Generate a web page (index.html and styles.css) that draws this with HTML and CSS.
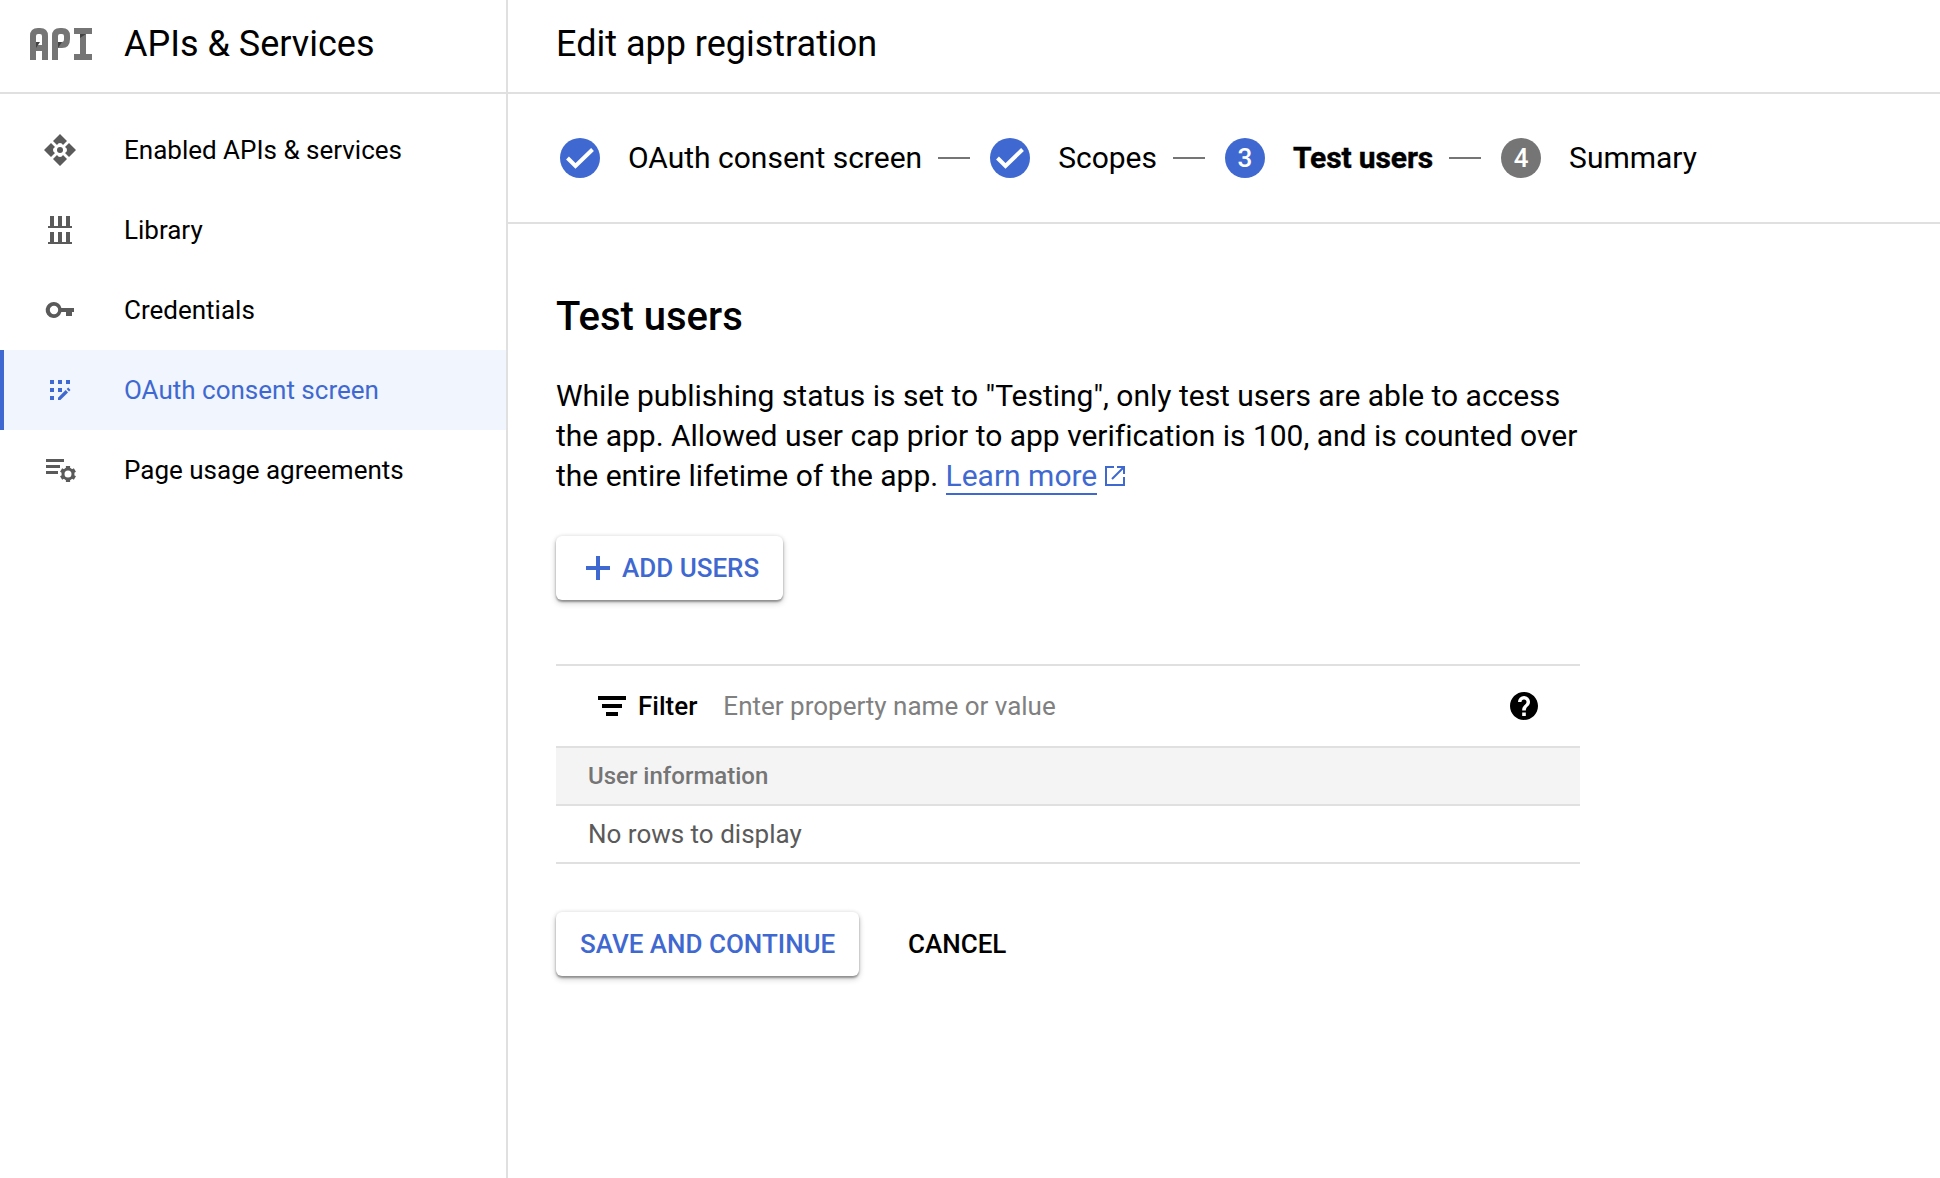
FILE: index.html
```html
<!DOCTYPE html>
<html lang="en">
<head>
<meta charset="utf-8">
<title>Edit app registration – APIs &amp; Services</title>
<link rel="stylesheet" href="styles.css">
</head>
<body>
<div class="app">
  <aside class="sidebar">
    <header class="sidebar-header">
      <svg class="product-logo" width="64" height="34" viewBox="0 0 64 34" aria-hidden="true">
        <g fill="none" stroke="#757575" stroke-width="6">
          <path d="M4 33V9Q4 4 9 4H11Q16 4 16 9V33M4 21H16"/>
          <path d="M26 33V9Q26 4 31 4H33Q38 4 38 9V12Q38 18 33 18H26"/>
          <path d="M45 4H63M54 4V30M45 30H63"/>
        </g>
        <path fill="#424242" d="M7 15V21L11 15ZM29 15V21L33 15ZM51 7H57L51 11Z"/>
      </svg>
      <h1 class="sidebar-title">APIs &amp; Services</h1>
    </header>
    <nav class="nav">
      <a class="nav-item">
        <svg class="nav-icon" viewBox="0 0 36 36"><path d="M18 2l7 7-4 4q-1-2-3-2t-3 2l-4-4zM34 18l-7 7-4-4q2-1 2-3t-2-3l4-4zM18 34l-7-7 4-4q1 2 3 2t3-2l4 4zM2 18l7-7 4 4q-2 1-2 3t2 3l-4 4z"/><circle cx="18" cy="18" r="3"/></svg>
        <span>Enabled APIs &amp; services</span>
      </a>
      <a class="nav-item">
        <svg class="nav-icon" viewBox="0 0 36 36"><path d="M8 4h4v10h4V4h4v10h4V4h4v10h2v2H6v-2h2zM8 20h4v10h4V20h4v10h4V20h4v10h2v2H6v-2h2z"/></svg>
        <span>Library</span>
      </a>
      <a class="nav-item">
        <svg class="nav-icon" viewBox="0 0 36 36"><path fill-rule="evenodd" d="M12 10a8 8 0 1 0 7.400 10H24v4h6v-4h2v-4H19.400A8 8 0 0 0 12 10zM12 13.800a4.200 4.200 0 1 1 0 8.400a4.200 4.200 0 0 1 0-8.400z"/></svg>
        <span>Credentials</span>
      </a>
      <a class="nav-item active">
        <svg class="nav-icon" viewBox="0 0 36 36"><path d="M8 8h4v4H8zM16 8h4v4h-4zM24 8h4v4h-4zM8 16h4v4H8zM16 16h4v4h-4zM8 24h4v4H8zM16 25.800l7.700-7.700 2.300 2.300-7.600 7.600H16zM24.700 17.100l1.500-1.500 2.300 2.300-1.500 1.500z"/></svg>
        <span>OAuth consent screen</span>
      </a>
      <a class="nav-item">
        <svg class="nav-icon" viewBox="0 0 36 36"><path d="M4 7h18v3H4zM4 13h14v3H4zM4 19h12v3H4z"/><circle cx="26" cy="22" r="5" fill="none" stroke="#5a5a5a" stroke-width="3"/><path d="M26 14v3.500M26 26.500v3.500M19.100 18l3 1.750M29.900 24.250l3 1.750M19.100 26l3-1.750M29.900 19.750l3-1.750" stroke="#5a5a5a" stroke-width="4.200"/></svg>
        <span>Page usage agreements</span>
      </a>
    </nav>
  </aside>
  <main class="main">
    <header class="page-header"><h2 class="page-title">Edit app registration</h2></header>
    <ol class="stepper">
      <li class="step">
        <svg class="badge" viewBox="0 0 40 40"><circle cx="20" cy="20" r="20" fill="#3f69d1"/><path d="M7.500 20l8 8L32.500 11.500" fill="none" stroke="#fff" stroke-width="4"/></svg>
        <span class="step-label">OAuth consent screen</span>
      </li>
      <li class="step">
        <svg class="badge" viewBox="0 0 40 40"><circle cx="20" cy="20" r="20" fill="#3f69d1"/><path d="M7.500 20l8 8L32.500 11.500" fill="none" stroke="#fff" stroke-width="4"/></svg>
        <span class="step-label">Scopes</span>
      </li>
      <li class="step current"><span class="badge number">3</span><span class="step-label">Test users</span></li>
      <li class="step"><span class="badge number pending">4</span><span class="step-label">Summary</span></li>
    </ol>
    <section class="content">
      <h3 class="section-title">Test users</h3>
      <p class="description">While publishing status is set to "Testing", only test users are able to access<br>the app. Allowed user cap prior to app verification is 100, and is counted over<br>the entire lifetime of the app. <a class="link">Learn more</a><svg class="external" viewBox="0 0 24 24"><path d="M11 3H3v18h18v-8M14 3h7v7M21 3L9 15" fill="none" stroke="#3f69d1" stroke-width="2"/></svg></p>
      <button class="button raised add">
        <svg width="24" height="24" viewBox="0 0 24 24"><path d="M12 0v24M0 12h24" stroke="#3f69d1" stroke-width="4"/></svg>
        <span>ADD USERS</span>
      </button>
      <div class="table">
        <div class="filter">
          <svg class="filter-icon" width="28" height="20" viewBox="0 0 28 20"><path d="M0 0h28v4H0zM4 8h20v4H4zM8 16h12v4H8z"/></svg>
          <span class="filter-label">Filter</span>
          <input class="filter-input" placeholder="Enter property name or value">
          <svg class="help" width="28" height="28" viewBox="2 2 20 20"><path d="M12 2C6.480 2 2 6.480 2 12s4.480 10 10 10 10-4.480 10-10S17.520 2 12 2zm1.300 17.200h-2.600v-2.500h2.600zm2.200-7.800l-.9.900c-.8.800-1.300 1.500-1.300 3h-2.600v-.6c0-1.100.500-2.100 1.200-2.900l1.300-1.300c.4-.4.600-.9.600-1.400a1.800 1.800 0 0 0-3.600 0H7.700a4.300 4.300 0 0 1 8.600 0c0 .9-.3 1.700-.8 2.300z"/></svg>
        </div>
        <div class="table-head">User information</div>
        <div class="table-row">No rows to display</div>
      </div>
      <div class="actions">
        <button class="button raised save">SAVE AND CONTINUE</button>
        <button class="button cancel">CANCEL</button>
      </div>
    </section>
  </main>
</div>
</body>
</html>
```
FILE: styles.css
```css
* { box-sizing: border-box; }
body { margin: 0; background: #fff; color: #000; font-family: Roboto, sans-serif; }
h1, h2, h3, p, ol { margin: 0; padding: 0; font-weight: 400; }
svg { flex: none; }

.app { display: flex; height: 1178px; overflow: hidden; }

.sidebar { width: 508px; flex: none; border-right: 2px solid #e0e0e0; }
.sidebar-header { display: flex; align-items: center; height: 94px; padding: 0 0 4px 29px; border-bottom: 2px solid #e0e0e0; }
.sidebar-title { margin-left: 31px; font-size: 36px; line-height: 48px; }

.nav { padding-top: 16px; }
.nav-item { display: flex; align-items: center; height: 80px; padding-left: 42px; font-size: 26px; }
.nav-icon { width: 36px; height: 36px; margin-right: 46px; fill: #5a5a5a; }
.nav-item.active { background: #f0f5fe; color: #3f69d1; box-shadow: inset 4px 0 #3f69d1; }
.active .nav-icon { fill: #3f69d1; }

.main { flex: 1; }
.page-header { display: flex; align-items: center; height: 94px; padding: 0 48px 4px; border-bottom: 2px solid #e0e0e0; }
.page-title { font-size: 36px; line-height: 48px; }

.stepper { display: flex; align-items: center; height: 130px; padding-left: 52px; border-bottom: 2px solid #e0e0e0; list-style: none; font-size: 30px; }
.step { display: flex; align-items: center; white-space: nowrap; }
.step + .step::before { content: ""; width: 32px; height: 2px; margin: 0 20px 0 16px; background: #757575; }
.step-label { padding-bottom: 1px; }
.badge { width: 40px; height: 40px; margin-right: 28px; }
.badge.number { display: flex; align-items: center; justify-content: center; border-radius: 50%; background: #3f69d1; color: #fff; font-size: 26px; font-weight: 500; }
.badge.pending { background: #757575; }
.current .step-label { font-weight: 700; letter-spacing: -.12px; -webkit-text-stroke: .4px #000; }

.content { padding: 68px 0 0 48px; width: 1072px; }
.section-title { font-size: 40px; line-height: 50px; font-weight: 500; }
.description { margin-top: 34px; font-size: 30px; line-height: 40px; letter-spacing: -.01px; white-space: nowrap; }
.link { color: #3f69d1; border-bottom: 2px solid #3f69d1; }
.external { width: 24px; height: 24px; margin-left: 6px; vertical-align: -2px; }

.button { display: flex; align-items: center; height: 64px; border: 0; background: none; font: 500 26px Roboto, sans-serif; white-space: nowrap; }
.raised { border-radius: 6px; background: #fff; color: #3f69d1; box-shadow: 0 2px 2px rgba(0,0,0,.3), 0 3px 6px rgba(0,0,0,.2), 0 0 4px rgba(0,0,0,.1); }
.add { width: 227px; margin-top: 40px; padding: 0 0 0 30px; gap: 12px; }

.table { width: 1024px; margin-top: 64px; border-top: 2px solid #e0e0e0; }
.filter { display: flex; align-items: center; height: 80px; padding: 0 42px; }
.filter-label { margin-left: 12px; font-size: 26px; font-weight: 500; }
.filter-input { flex: 1; min-width: 0; margin-left: 26px; padding: 0; border: 0; outline: 0; font: 26px Roboto, sans-serif; }
.filter-input::placeholder { color: #808080; opacity: 1; }
.table-head { height: 60px; padding-left: 32px; border-top: 2px solid #e0e0e0; border-bottom: 2px solid #e0e0e0; background: #f4f4f4; color: #757575; font-size: 24px; line-height: 56px; font-weight: 500; }
.table-row { height: 58px; padding-left: 32px; border-bottom: 2px solid #e0e0e0; color: #5a5a5a; font-size: 26px; line-height: 56px; }

.actions { display: flex; gap: 49px; margin-top: 48px; }
.save { width: 303px; padding: 0 24px; }
.cancel { padding: 0; color: #000; }
```
